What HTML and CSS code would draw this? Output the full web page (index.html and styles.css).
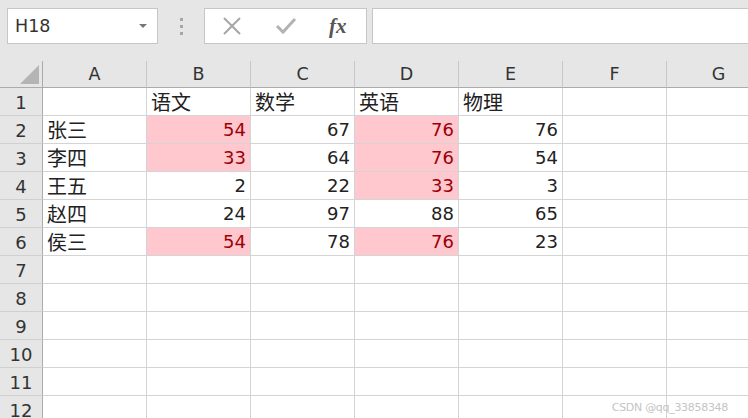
FILE: index.html
```html
<!DOCTYPE html>
<html>
<head>
<meta charset="utf-8">
<link rel="stylesheet" href="styles.css">
</head>
<body>
<div class="app">
  <div class="toolbar">
    <div class="namebox">
      <span class="name">H18</span>
      <span class="caret"></span>
    </div>
    <div class="dots"><i></i><i></i><i></i></div>
    <div class="fbuttons">
      <svg class="ico" width="22" height="22" viewBox="0 0 22 22"><path d="M3 3 L19 19 M19 3 L3 19" stroke="#a6a6a6" stroke-width="2" fill="none"/></svg>
      <svg class="ico" width="22" height="22" viewBox="0 0 22 22"><path d="M2 11 L8 17 L20 4" stroke="#b3b3b3" stroke-width="3" fill="none"/></svg>
      <span class="fx">fx</span>
    </div>
    <div class="formula"></div>
  </div>
  <div class="sheet">
    <div class="corner"><span class="tri"></span></div>
    <div class="ch">A</div><div class="ch">B</div><div class="ch">C</div><div class="ch">D</div><div class="ch">E</div><div class="ch">F</div><div class="ch">G</div>

    <div class="rh">1</div><div class="c"></div><div class="c">语文</div><div class="c">数学</div><div class="c">英语</div><div class="c">物理</div><div class="c"></div><div class="c"></div>
    <div class="rh">2</div><div class="c">张三</div><div class="c n bad">54</div><div class="c n">67</div><div class="c n bad">76</div><div class="c n">76</div><div class="c"></div><div class="c"></div>
    <div class="rh">3</div><div class="c">李四</div><div class="c n bad">33</div><div class="c n">64</div><div class="c n bad">76</div><div class="c n">54</div><div class="c"></div><div class="c"></div>
    <div class="rh">4</div><div class="c">王五</div><div class="c n">2</div><div class="c n">22</div><div class="c n bad">33</div><div class="c n">3</div><div class="c"></div><div class="c"></div>
    <div class="rh">5</div><div class="c">赵四</div><div class="c n">24</div><div class="c n">97</div><div class="c n">88</div><div class="c n">65</div><div class="c"></div><div class="c"></div>
    <div class="rh">6</div><div class="c">侯三</div><div class="c n bad">54</div><div class="c n">78</div><div class="c n bad">76</div><div class="c n">23</div><div class="c"></div><div class="c"></div>
    <div class="rh">7</div><div class="c"></div><div class="c"></div><div class="c"></div><div class="c"></div><div class="c"></div><div class="c"></div><div class="c"></div>
    <div class="rh">8</div><div class="c"></div><div class="c"></div><div class="c"></div><div class="c"></div><div class="c"></div><div class="c"></div><div class="c"></div>
    <div class="rh">9</div><div class="c"></div><div class="c"></div><div class="c"></div><div class="c"></div><div class="c"></div><div class="c"></div><div class="c"></div>
    <div class="rh">10</div><div class="c"></div><div class="c"></div><div class="c"></div><div class="c"></div><div class="c"></div><div class="c"></div><div class="c"></div>
    <div class="rh">11</div><div class="c"></div><div class="c"></div><div class="c"></div><div class="c"></div><div class="c"></div><div class="c"></div><div class="c"></div>
    <div class="rh rh-last">12</div><div class="c"></div><div class="c"></div><div class="c"></div><div class="c"></div><div class="c"></div><div class="c"></div><div class="c"></div>
  </div>
  <div class="watermark">CSDN @qq_33858348</div>
</div>
</body>
</html>
```
FILE: styles.css
```css
html, body {
  margin: 0;
  padding: 0;
  background: #ffffff;
  overflow: hidden;
}
.app {
  position: relative;
  width: 748px;
  height: 418px;
  overflow: hidden;
  font-family: "Noto Sans CJK SC", "Noto Sans", sans-serif;
  color: #222;
}
.toolbar {
  height: 61px;
  background: #e6e6e6;
  display: flex;
  align-items: flex-start;
  padding-top: 8px;
  box-sizing: border-box;
}
.namebox {
  margin-left: 7px;
  width: 151px;
  height: 36px;
  box-sizing: border-box;
  background: #fff;
  border: 1px solid #c6c6c6;
  display: flex;
  align-items: center;
  justify-content: space-between;
  padding: 0 10px 0 7px;
}
.name {
  font-family: "DejaVu Sans", sans-serif;
  font-size: 17.5px;
  color: #333;
}
.caret {
  width: 0;
  height: 0;
  border-left: 4px solid transparent;
  border-right: 4px solid transparent;
  border-top: 4px solid #777;
}
.dots {
  width: 46px;
  height: 36px;
  display: flex;
  flex-direction: column;
  align-items: center;
  justify-content: center;
  gap: 4px;
}
.dots i {
  display: block;
  width: 3px;
  height: 3px;
  background: #a6a6a6;
}
.fbuttons {
  width: 163px;
  height: 36px;
  box-sizing: border-box;
  background: #fff;
  border: 1px solid #c6c6c6;
  display: flex;
  align-items: center;
  padding-left: 16px;
  gap: 32px;
}
.fx {
  font-family: "Liberation Serif", serif;
  font-style: italic;
  font-weight: bold;
  font-size: 21px;
  color: #555;
  margin-left: 0px;
}
.formula {
  margin-left: 5px;
  flex: 1;
  height: 36px;
  box-sizing: border-box;
  background: #fff;
  border: 1px solid #c6c6c6;
  border-right: none;
}
.sheet {
  display: grid;
  grid-template-columns: 43px repeat(7, 104px);
  grid-template-rows: 27px repeat(12, 28px);
}
.corner {
  background: #e6e6e6;
  border-right: 1px solid #ababab;
  border-bottom: 1px solid #ababab;
  box-sizing: border-box;
  position: relative;
}
.tri {
  position: absolute;
  right: 3px;
  bottom: 3px;
  width: 0;
  height: 0;
  border-left: 19px solid transparent;
  border-bottom: 19px solid #b4b4b4;
}
.ch {
  background: #e6e6e6;
  border-bottom: 1px solid #ababab;
  border-right: 1px solid #c8c8c8;
  box-sizing: border-box;
  display: flex;
  align-items: flex-end;
  justify-content: center;
  padding-bottom: 2px;
  font-family: "DejaVu Sans", sans-serif;
  font-size: 17.5px;
  color: #333;
  line-height: 22px;
}
.rh {
  background: #e6e6e6;
  border-right: 1px solid #ababab;
  border-bottom: 1px solid #d0d0d0;
  box-sizing: border-box;
  display: flex;
  align-items: flex-end;
  justify-content: center;
  padding-bottom: 1px;
  font-family: "DejaVu Sans", sans-serif;
  font-size: 18px;
  color: #333;
  line-height: 22px;
}
.rh-last {
  align-items: flex-start;
  padding-top: 4px;
}
.c {
  border-right: 1px solid #d4d4d4;
  border-bottom: 1px solid #d4d4d4;
  box-sizing: border-box;
  display: flex;
  align-items: flex-end;
  padding: 0 4px 1px 4px;
  font-size: 20px;
  line-height: 24px;
  color: #222;
  white-space: nowrap;
}
.c.n {
  justify-content: flex-end;
  font-family: "DejaVu Sans", sans-serif;
  font-size: 18px;
  line-height: 22px;
  padding-bottom: 2px;
}
.c.bad {
  background: #ffc7ce;
  color: #9c0006;
}
.watermark {
  position: absolute;
  right: 20px;
  bottom: 4px;
  font-family: "DejaVu Sans", sans-serif;
  font-size: 11px;
  color: #c4c4c4;
  letter-spacing: -0.3px;
}
```
